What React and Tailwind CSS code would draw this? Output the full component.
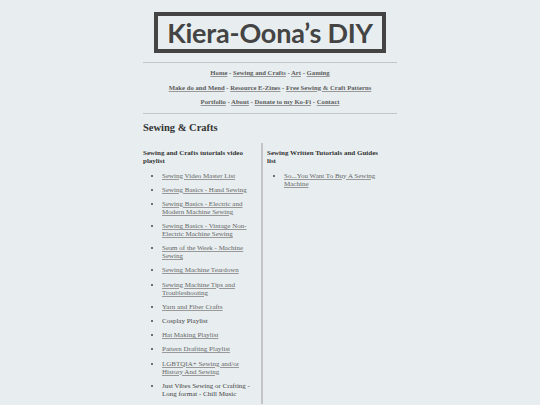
import React from "react";

const serif = { fontFamily: '"Liberation Serif", "Times New Roman", serif' };

function Item({ children, link = true }) {
  return (
    <li className="mb-[6.2px] list-disc font-normal leading-[8px]">
      {link ? (
        <a href="#" className="text-[#666] underline decoration-[#999]">{children}</a>
      ) : (
        <span className="text-[#444]">{children}</span>
      )}
    </li>
  );
}

export default function App() {
  const sep = <span className="text-[#555]"> - </span>;
  const L = ({ children }) => (
    <a href="#" className="text-[#5c5c5c] underline decoration-[#999]">{children}</a>
  );
  return (
    <div className="h-[405px] w-full bg-[#e8eef0] overflow-hidden" style={serif}>
      <div className="mx-auto w-[254px] pt-[12px]">
        <div className="mx-auto flex h-[41px] w-[232px] items-center justify-center border-4 border-[#444]">
          <span
            className="text-[27px] font-bold leading-none tracking-[-0.2px] text-[#444]"
            style={{ fontFamily: 'Lato, "DejaVu Sans", sans-serif' }}
          >
            Kiera-Oona’s DIY
          </span>
        </div>
        <div className="mt-[9px] h-px bg-[#c4c8ca]" />
        <div className="mt-[3px] text-center text-[6.7px] font-bold leading-[14.5px]">
          <div>
            <L>Home</L>{sep}<L>Sewing and Crafts</L>{sep}<L>Art</L>{sep}<L>Gaming</L>
          </div>
          <div>
            <L>Make do and Mend</L>{sep}<L>Resource E-Zines</L>{sep}<L>Free Sewing &amp; Craft Patterns</L>
          </div>
          <div>
            <L>Portfolio</L>{sep}<L>About</L>{sep}<L>Donate to my Ko-Fi</L>{sep}<L>Contact</L>
          </div>
        </div>
        <div className="mt-[3px] h-px bg-[#c4c8ca]" />
        <h1 className="mt-[7px] text-[10.5px] font-bold leading-[14px] text-[#333]">Sewing &amp; Crafts</h1>
        <div className="mt-[8px] flex text-[7px]">
          <div className="w-[120px] shrink-0 border-r-2 border-[#c2c4c6] pr-[2px] pt-[6px]">
            <h2 className="font-bold leading-[8px] text-[#333]">Sewing and Crafts tutorials video playlist</h2>
            <ul className="mt-[7px] pl-[19px] marker:text-[#444]">
              <Item>Sewing Video Master List</Item>
              <Item>Sewing Basics - Hand Sewing</Item>
              <Item>Sewing Basics - Electric and Modern Machine Sewing</Item>
              <Item>Sewing Basics - Vintage Non-Electric Machine Sewing</Item>
              <Item>Seam of the Week - Machine Sewing</Item>
              <Item>Sewing Machine Teardown</Item>
              <Item>Sewing Machine Tips and Troubleshooting</Item>
              <Item>Yarn and Fiber Crafts</Item>
              <Item link={false}>Cosplay Playlist</Item>
              <Item>Hat Making Playlist</Item>
              <Item>Pattern Drafting Playlist</Item>
              <Item>LGBTQIA+ Sewing and/or History And Sewing</Item>
              <Item link={false}>Just Vibes Sewing or Crafting - Long format - Chill Music</Item>
            </ul>
          </div>
          <div className="w-[120px] pl-[4px] pt-[6px]">
            <h2 className="font-bold leading-[8px] text-[#333]">Sewing Written Tutorials and Guides list</h2>
            <ul className="mt-[7px] pl-[17px] marker:text-[#444]">
              <Item>So...You Want To Buy A Sewing Machine</Item>
            </ul>
          </div>
        </div>
      </div>
    </div>
  );
}
